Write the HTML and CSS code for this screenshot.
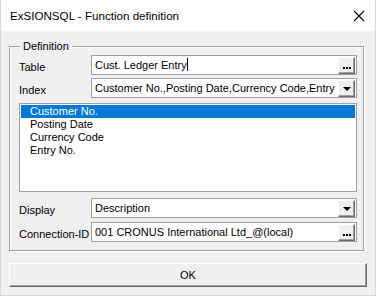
FILE: index.html
```html
<!DOCTYPE html>
<html>
<head>
<meta charset="utf-8">
<link rel="stylesheet" href="styles.css">
</head>
<body>
<div class="window">
  <div class="titlebar">
    <span class="title">ExSIONSQL - Function definition</span>
    <svg class="close" width="12" height="12" viewBox="0 0 12 12"><path d="M1 1 L11 11 M11 1 L1 11" stroke="#000" stroke-width="1.1" fill="none"/></svg>
  </div>
  <div class="client">
    <div class="group">
      <span class="group-title">Definition</span>
      <div class="row">
        <span class="label">Table</span>
        <div class="field">
          <span class="value">Cust. Ledger Entry<span class="caret"></span></span>
          <span class="btn dots"><i></i><i></i><i></i></span>
        </div>
      </div>
      <div class="row gap3">
        <span class="label">Index</span>
        <div class="field">
          <span class="value">Customer No.,Posting Date,Currency Code,Entry No.</span>
          <span class="btn drop"><b></b></span>
        </div>
      </div>
      <div class="list">
        <div class="item selected">Customer No.</div>
        <div class="item">Posting Date</div>
        <div class="item">Currency Code</div>
        <div class="item">Entry No.</div>
      </div>
      <div class="row gap6">
        <span class="label">Display</span>
        <div class="field">
          <span class="value">Description</span>
          <span class="btn drop"><b></b></span>
        </div>
      </div>
      <div class="row gap4">
        <span class="label">Connection-ID</span>
        <div class="field">
          <span class="value">001 CRONUS International Ltd_@(local)</span>
          <span class="btn dots"><i></i><i></i><i></i></span>
        </div>
      </div>
    </div>
    <div class="ok">OK</div>
  </div>
</div>
</body>
</html>
```
FILE: styles.css
```css
* { box-sizing: border-box; }
html, body { margin: 0; padding: 0; }
body {
  width: 376px;
  height: 296px;
  overflow: hidden;
  font-family: "Liberation Sans", Arial, sans-serif;
  font-size: 11px;
  color: #000;
  background: #f0f0f0;
}
.window {
  width: 376px;
  height: 296px;
  border: 1px solid #d6d6d6;
  border-top: none;
  display: flex;
  flex-direction: column;
  background: #f0f0f0;
}
.titlebar {
  height: 31px;
  background: #fff;
  display: flex;
  align-items: center;
  justify-content: space-between;
  padding: 0 9px 0 9px;
  flex: none;
}
.title {
  font-size: 11.6px;
  color: #000;
}
.close { display: block; margin-right: 1px; }
.client {
  flex: 1;
  padding: 15px 0 0 8px;
  display: flex;
  flex-direction: column;
}
.group {
  position: relative;
  width: 355px;
  border: 1px solid #a0a0a0;
  box-shadow: inset 1px 1px 0 #fff, 1px 1px 0 #fff;
  padding: 8px 6px 8px 9px;
  display: flex;
  flex-direction: column;
}
.group-title {
  position: absolute;
  left: 10px;
  top: -8px;
  padding: 0 3px;
  background: #f0f0f0;
  line-height: 14px;
}
.row {
  display: flex;
  align-items: center;
  height: 20px;
}
.gap3 { margin-top: 3px; }
.gap6 { margin-top: 6px; }
.gap4 { margin-top: 4px; }
.label {
  width: 72px;
  flex: none;
  padding-top: 3px;
}
.field {
  flex: 1;
  height: 20px;
  background: #fff;
  border: 1px solid #a0a0a0;
  display: flex;
  align-items: center;
  padding: 0 1px 0 3px;
  overflow: hidden;
}
.value {
  flex: 1;
  white-space: nowrap;
  overflow: hidden;
  position: relative;
  line-height: 16px;
}
.caret {
  display: inline-block;
  width: 1px;
  height: 13px;
  background: #000;
  vertical-align: -2px;
}
.btn {
  flex: none;
  width: 17px;
  height: 17px;
  background: #f0f0f0;
  border-top: 1px solid #fff;
  border-left: 1px solid #fff;
  border-right: 1px solid #696969;
  border-bottom: 1px solid #696969;
  box-shadow: inset -1px -1px 0 #a0a0a0;
  display: flex;
  align-items: center;
  justify-content: center;
}
.dots {
  align-items: flex-end;
  padding-bottom: 4px;
  gap: 1px;
}
.dots i {
  display: block;
  width: 2px;
  height: 2px;
  background: #000;
}
.drop b {
  display: block;
  width: 0;
  height: 0;
  border-left: 4px solid transparent;
  border-right: 4px solid transparent;
  border-top: 4px solid #000;
  margin-top: 1px;
}
.list {
  margin-top: 5px;
  height: 89px;
  background: #fff;
  border: 1px solid #a0a0a0;
  padding: 1px 1px;
  display: flex;
  flex-direction: column;
}
.item {
  height: 13px;
  line-height: 13px;
  padding-left: 9px;
  white-space: nowrap;
}
.item.selected {
  background: #0078d7;
  color: #fff;
}
.ok {
  margin-top: 12px;
  width: 358px;
  height: 24px;
  background: #f0f0f0;
  border-top: 1px solid #fff;
  border-left: 1px solid #fff;
  border-right: 1px solid #696969;
  border-bottom: 1px solid #696969;
  box-shadow: inset -1px -1px 0 #a0a0a0;
  display: flex;
  align-items: center;
  justify-content: center;
  line-height: 14px;
}
```
